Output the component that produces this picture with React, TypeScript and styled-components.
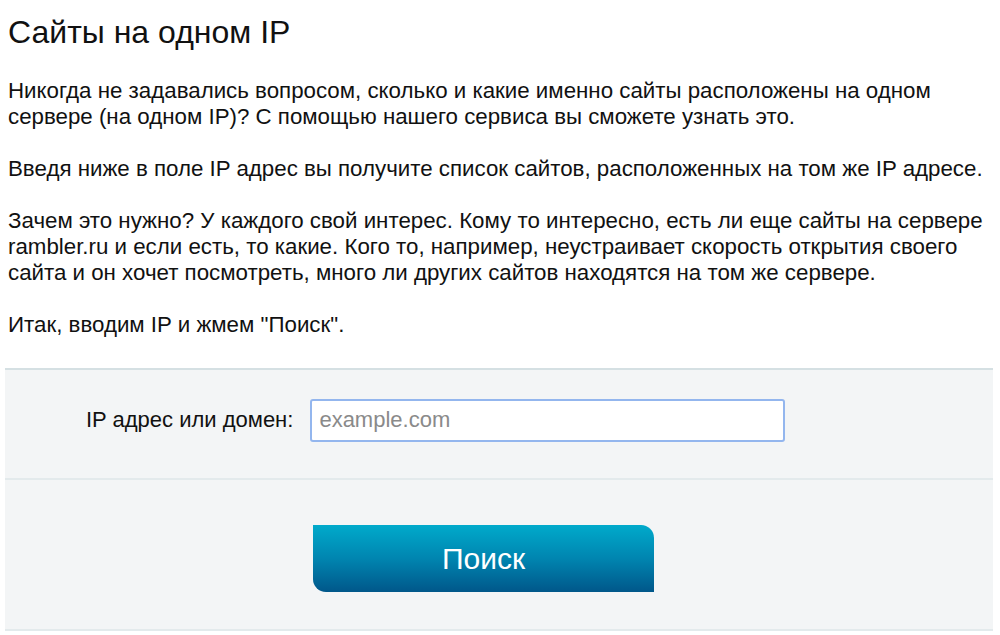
import React from "react";
import styled, { createGlobalStyle } from "styled-components";

const Global = createGlobalStyle`
  html, body { margin: 0; padding: 0; background: #ffffff; }
  body { font-family: Arial, "Liberation Sans", sans-serif; color: #111; }
`;

const Page = styled.div`
  width: 1000px;
  height: 635px;
  overflow: hidden;
  box-sizing: border-box;
  padding: 13px 7px 0 5px;
`;

const Title = styled.h1`
  margin: 0 0 0 3px;
  font-size: 32px;
  font-weight: normal;
  line-height: 38px;
  color: #111;
`;

const Text = styled.div`
  margin: 27px 0 0 3px;
  font-size: 22.3px;
  line-height: 26px;
`;

const Para = styled.p`
  margin: 0 0 26px 0;
  &:last-child { margin-bottom: 0; }
`;

const Form = styled.div`
  margin-top: 30px;
  background: #f3f5f6;
  border-top: 2px solid #d5e0e3;
  border-bottom: 2px solid #e3eaec;
`;

const Row = styled.div`
  display: flex;
  align-items: center;
  padding: 0 0 8px 81px;
  height: 108px;
  box-sizing: border-box;
`;

const Divider = styled.div`
  height: 2px;
  background: #e3eaec;
`;

const Label = styled.label`
  font-size: 22px;
  color: #111;
  margin-right: 17px;
`;

const Input = styled.input`
  width: 475px;
  height: 43px;
  box-sizing: border-box;
  border: 2px solid #93b6ee;
  border-radius: 3px;
  padding: 0 7px;
  font-family: Arial, "Liberation Sans", sans-serif;
  font-size: 22px;
  outline: none;
  background: #fff;
  &::placeholder { color: #8a8a8a; }
`;

const ButtonRow = styled.div`
  display: flex;
  padding: 45px 0 37px 308px;
`;

const Button = styled.button`
  width: 341px;
  height: 67px;
  border: none;
  border-radius: 0 13px 0 13px;
  background: linear-gradient(to bottom, #00aacb 0%, #0085b0 50%, #00578a 100%);
  color: #fff;
  font-family: Arial, "Liberation Sans", sans-serif;
  font-size: 30px;
  cursor: pointer;
`;

export default function App() {
  return (
    <>
      <Global />
      <Page>
        <Title>Сайты на одном IP</Title>
        <Text>
          <Para>
            Никогда не задавались вопросом, сколько и какие именно сайты расположены на одном
            <br />
            сервере (на одном IP)? С помощью нашего сервиса вы сможете узнать это.
          </Para>
          <Para>
            Введя ниже в поле IP адрес вы получите список сайтов, расположенных на том же IP адресе.
          </Para>
          <Para>
            Зачем это нужно? У каждого свой интерес. Кому то интересно, есть ли еще сайты на сервере
            <br />
            rambler.ru и если есть, то какие. Кого то, например, неустраивает скорость открытия своего
            <br />
            сайта и он хочет посмотреть, много ли других сайтов находятся на том же сервере.
          </Para>
          <Para>Итак, вводим IP и жмем "Поиск".</Para>
        </Text>
        <Form>
          <Row>
            <Label htmlFor="ip">IP адрес или домен:</Label>
            <Input id="ip" placeholder="example.com" />
          </Row>
          <Divider />
          <ButtonRow>
            <Button>Поиск</Button>
          </ButtonRow>
        </Form>
      </Page>
    </>
  );
}
